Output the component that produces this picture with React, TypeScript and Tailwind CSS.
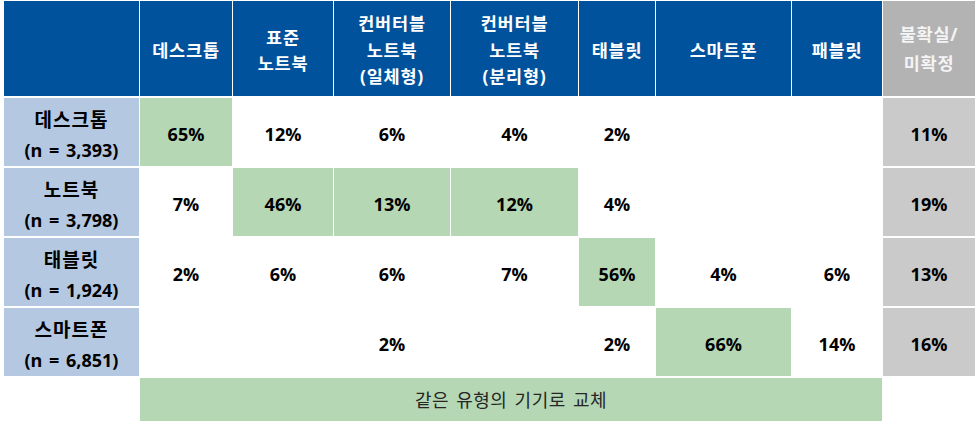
import React from "react";

const font = { fontFamily: '"Open Sans", "Noto Sans CJK KR", sans-serif' };

type Cell = { v: string; g?: boolean };

const headers: string[][] = [
  ["데스크톱"],
  ["표준", "노트북"],
  ["컨버터블", "노트북", "(일체형)"],
  ["컨버터블", "노트북", "(분리형)"],
  ["태블릿"],
  ["스마트폰"],
  ["패블릿"],
];

const rows: { label: string; n: string; cells: Cell[]; u: string }[] = [
  {
    label: "데스크톱",
    n: "(n = 3,393)",
    cells: [{ v: "65%", g: true }, { v: "12%" }, { v: "6%" }, { v: "4%" }, { v: "2%" }, { v: "" }, { v: "" }],
    u: "11%",
  },
  {
    label: "노트북",
    n: "(n = 3,798)",
    cells: [{ v: "7%" }, { v: "46%", g: true }, { v: "13%", g: true }, { v: "12%", g: true }, { v: "4%" }, { v: "" }, { v: "" }],
    u: "19%",
  },
  {
    label: "태블릿",
    n: "(n = 1,924)",
    cells: [{ v: "2%" }, { v: "6%" }, { v: "6%" }, { v: "7%" }, { v: "56%", g: true }, { v: "4%" }, { v: "6%" }],
    u: "13%",
  },
  {
    label: "스마트폰",
    n: "(n = 6,851)",
    cells: [{ v: "" }, { v: "" }, { v: "2%" }, { v: "" }, { v: "2%" }, { v: "66%", g: true }, { v: "14%" }],
    u: "16%",
  },
];

export default function App() {
  return (
    <div className="w-[975px] h-[424px] bg-white pl-[4px] pt-[1px] overflow-hidden" style={font}>
      <div className="grid grid-cols-[135px_92px_100px_116px_127px_76px_135px_90px_92px] grid-rows-[95px_68px_68px_68px_68px_43px] gap-x-px gap-y-[2px]">
        <div className="bg-[#00529c]" />
        {headers.map((h, i) => (
          <div
            key={i}
            className="bg-[#00529c] flex flex-col items-center justify-center text-white font-bold text-[17.5px] leading-[26.5px] text-center pt-[3px] tracking-[0.8px]"
          >
            {h.map((l, j) => (
              <span key={j}>{l}</span>
            ))}
          </div>
        ))}
        <div className="bg-[#b3b3b3] flex flex-col items-center justify-center text-[#f4f4f4] font-bold text-[17.5px] leading-[29px] text-center pt-[1px] tracking-[0.8px]">
          <span>불확실/</span>
          <span>미확정</span>
        </div>

        {rows.map((r, ri) => (
          <React.Fragment key={ri}>
            <div className="bg-[#b4c8e1] flex flex-col items-center justify-center text-black font-bold leading-[30px] text-center pt-[5px]">
              <span className="text-[19px] tracking-[1px]">{r.label}</span>
              <span className="text-[18px] [word-spacing:2px]">{r.n}</span>
            </div>
            {r.cells.map((c, ci) => (
              <div
                key={ci}
                className={
                  (c.g ? "bg-[#b5d7b4] " : "bg-white ") +
                  "flex items-center justify-center text-black font-bold text-[18px] pt-[4px]"
                }
              >
                {c.v}
              </div>
            ))}
            <div className="bg-[#cacaca] flex items-center justify-center text-black font-bold text-[18px] pt-[4px]">
              {r.u}
            </div>
          </React.Fragment>
        ))}

        <div className="bg-white" />
        <div className="col-span-7 bg-[#b5d7b4] flex items-center justify-center text-[#262626] text-[18px] pt-[1px] tracking-[0.5px] [word-spacing:2px]">
          같은 유형의 기기로 교체
        </div>
        <div className="bg-white" />
      </div>
    </div>
  );
}
